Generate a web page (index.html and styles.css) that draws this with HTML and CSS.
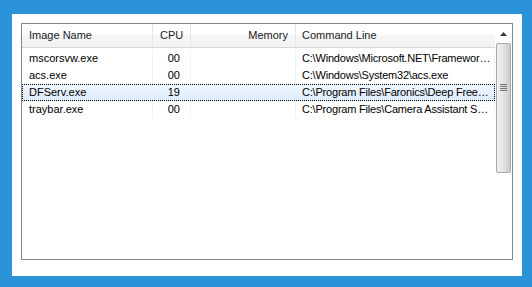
FILE: index.html
```html
<!DOCTYPE html>
<html>
<head>
  <title>Processes</title>
  <link rel="stylesheet" href="styles.css">
</head>
<body>
  <div class="panel">
    <div class="listbox">
      <div class="list">
        <div class="header">
          <div class="col">Image Name</div>
          <div class="col num">CPU</div>
          <div class="col num">Memory</div>
          <div class="col">Command Line</div>
        </div>
        <div class="row">
          <div class="cell">mscorsvw.exe</div>
          <div class="cell num">00</div>
          <div class="cell num"></div>
          <div class="cell">C:\Windows\Microsoft.NET\Framework\v4.0.30319\mscorsvw.exe</div>
        </div>
        <div class="row">
          <div class="cell">acs.exe</div>
          <div class="cell num">00</div>
          <div class="cell num"></div>
          <div class="cell">C:\Windows\System32\acs.exe</div>
        </div>
        <div class="row selected">
          <div class="cell">DFServ.exe</div>
          <div class="cell num">19</div>
          <div class="cell num"></div>
          <div class="cell">C:\Program Files\Faronics\Deep Freeze\Install C-0\DFServ.exe</div>
        </div>
        <div class="row">
          <div class="cell">traybar.exe</div>
          <div class="cell num">00</div>
          <div class="cell num"></div>
          <div class="cell">C:\Program Files\Camera Assistant Software\traybar.exe</div>
        </div>
      </div>
      <div class="scrollbar">
        <div class="arrow"><svg width="7" height="4" viewBox="0 0 7 4"><path d="M0 4 L3.5 0 L7 4 Z" fill="#3b3b3b"/></svg></div>
        <div class="thumb">
          <div class="grip"></div>
        </div>
      </div>
    </div>
  </div>
</body>
</html>
```

FILE: styles.css
```css
body {
  margin: 0;
  background-color: #2a93d8;
  padding: 14px 10px 11px 12px;
  font-family: 'Liberation Sans', Arial, sans-serif;
  font-size: 11px;
  color: #000;
}

.panel {
  background-color: #fff;
  height: 262px;
  padding: 9px 9px 0 9px;
  box-sizing: border-box;
}

.listbox {
  display: flex;
  width: 492px;
  height: 237px;
  border: 1px solid #828790;
  box-sizing: border-box;
  background-color: #fff;
}

.list {
  width: 473px;
}

.header,
.row {
  display: grid;
  grid-template-columns: 131px 38px 105px 199px;
}

.header {
  height: 23px;
  background: linear-gradient(#fff, #fff 50%, #f4f5f7 50%, #f2f3f5);
  border-bottom: 1px solid #d5d5d5;
  margin-bottom: 2px;
  color: #1a1a1a;
}

.col {
  line-height: 23px;
  padding: 0 7px;
  border-right: 1px solid #e3e5e8;
  white-space: nowrap;
  overflow: hidden;
}

.col:last-child {
  padding-left: 6px;
  border-right: none;
}

.col.num {
  text-align: right;
}

.row {
  height: 17px;
  box-sizing: border-box;
}

.cell {
  line-height: 17px;
  padding: 0 7px;
  border-right: 1px solid #eef1f8;
  white-space: nowrap;
  overflow: hidden;
  text-overflow: ellipsis;
}

.cell.num {
  text-align: right;
  padding-right: 10px;
}

.cell:last-child {
  padding-left: 6px;
  padding-right: 1px;
  letter-spacing: -0.2px;
}

.row.selected {
  background: linear-gradient(#f2f8fe, #dcebfc);
  outline: 1px dotted #000;
  outline-offset: -1px;
}

.row.selected .cell {
  border-right-color: transparent;
}

.scrollbar {
  width: 17px;
  background-color: #fff;
  display: flex;
  flex-direction: column;
  align-items: center;
}

.arrow {
  height: 19px;
  width: 17px;
  display: flex;
  justify-content: center;
  align-items: center;
}

.thumb {
  width: 15px;
  height: 130px;
  border: 1px solid #a8a8a8;
  border-radius: 2px;
  box-sizing: border-box;
  background: linear-gradient(to right, #f1f1f1, #e6e6e6 45%, #c9c9c9);
  display: flex;
  justify-content: center;
  align-items: flex-start;
  padding-top: 40px;
}

.grip {
  width: 7px;
  height: 7px;
  background: repeating-linear-gradient(#5a5a5a 0, #5a5a5a 1px, transparent 1px, transparent 2px);
  opacity: 0.8;
}
```
